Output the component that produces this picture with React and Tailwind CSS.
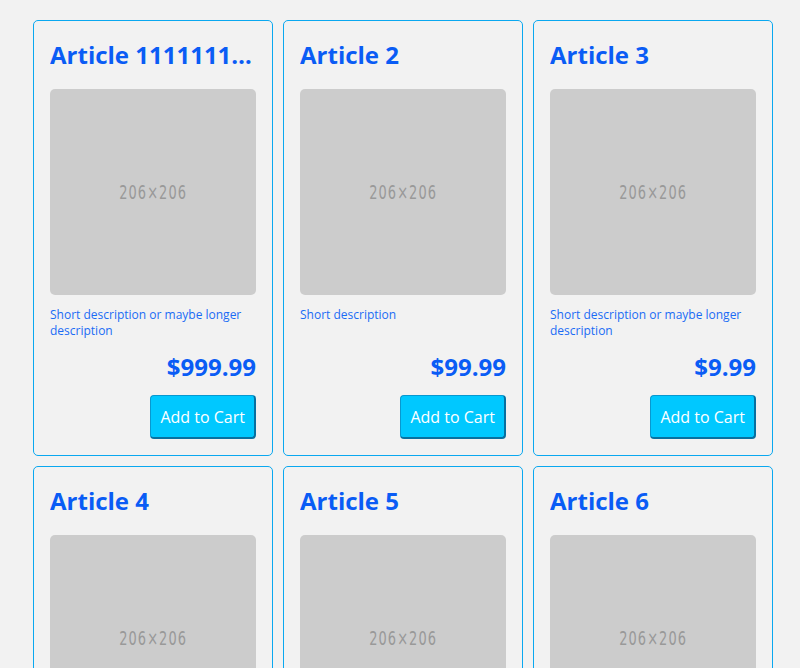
import React from "react";

const articles = [
  { id: 1, title: "Article 11111111111111", desc: "Short description or maybe longer description", price: "$999.99" },
  { id: 2, title: "Article 2", desc: "Short description", price: "$99.99" },
  { id: 3, title: "Article 3", desc: "Short description or maybe longer description", price: "$9.99" },
  { id: 4, title: "Article 4", desc: "Short description", price: "$19.99" },
  { id: 5, title: "Article 5", desc: "Short description", price: "$29.99" },
  { id: 6, title: "Article 6", desc: "Short description", price: "$39.99" },
];

const ArticleCard = ({ article }) => {
  return (
    <div className="flex flex-col rounded-[5px] border border-[#0aa8f0] bg-[#f2f2f2] p-4">
      <h2 className="truncate pt-[2px] text-[24px] font-bold leading-[32px] text-[#0a5cf5]">
        {article.title}
      </h2>
      <div className="mt-[18px] flex h-[206px] w-[206px] items-center justify-center rounded-[5px] bg-[#cccccc]">
        <span
          className="inline-block scale-x-[0.72] text-[20px] tracking-[1.5px] text-[#999999]"
          style={{ fontFamily: '"DejaVu Sans", sans-serif', fontStretch: "condensed" }}
        >
          206×206
        </span>
      </div>
      <p className="mt-[12px] text-[12px] leading-[16px] text-[#1a6cf5]">
        {article.desc}
      </p>
      <div className="mt-auto flex flex-col items-end pt-[13px]">
        <div className="text-[24px] font-bold leading-[30px] text-[#0a5cf5]">
          {article.price}
        </div>
        <button className="mt-[13px] h-[44px] rounded-[4px] border border-[#0898d0] border-b-2 border-r-2 border-b-[#0770a0] border-r-[#0770a0] bg-[#00c8ff] px-[9px] text-[16px] text-white">
          Add to Cart
        </button>
      </div>
    </div>
  );
};

export default function App() {
  return (
    <div
      className="min-h-screen bg-[#f2f2f2] pt-[20px] pl-[33px]"
      style={{ fontFamily: '"Open Sans", sans-serif' }}
    >
      <div className="grid w-[740px] grid-cols-3 gap-[10px]">
        {articles.map((article) => (
          <ArticleCard key={article.id} article={article} />
        ))}
      </div>
    </div>
  );
}
